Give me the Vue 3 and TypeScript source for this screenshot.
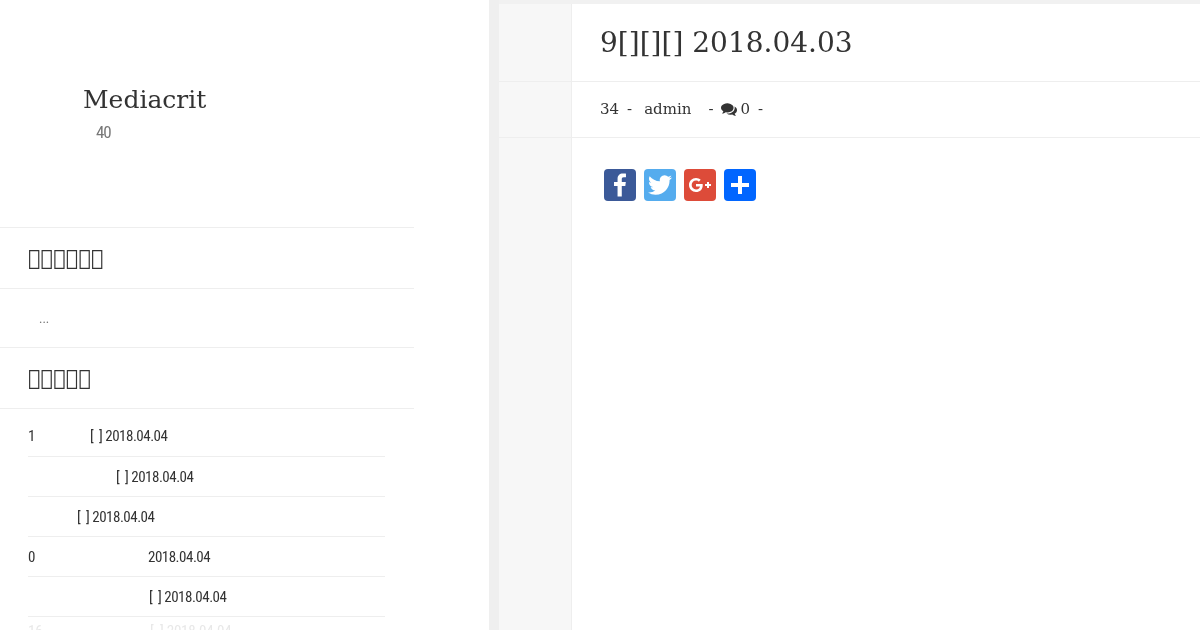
<script setup lang="ts">
interface Row { lead: string; pad: number; text: string; faint?: boolean }
const bracket = '[\u2009\u2009\u200A]\u00A0'
const rows: Row[] = [
  { lead: '1', pad: 62, text: bracket + '2018.04.04' },
  { lead: '', pad: 88, text: bracket + '2018.04.04' },
  { lead: '', pad: 49, text: bracket + '2018.04.04' },
  { lead: '0', pad: 120, text: '2018.04.04' },
  { lead: '', pad: 121, text: bracket + '2018.04.04' },
  { lead: '16', pad: 122, text: bracket + '2018.04.04', faint: true },
]
</script>

<template>
  <div class="page">
    <aside class="side">
      <header class="brand">
        <div class="logo">Mediacrit</div>
        <div class="sub">40</div>
      </header>
      <h3 class="wtitle first">&#xE000;&#xE000;&#xE000;&#xE000;&#xE000;&#xE000;</h3>
      <div class="dots">...</div>
      <h3 class="wtitle">&#xE000;&#xE000;&#xE000;&#xE000;&#xE000;</h3>
      <ul class="list">
        <li v-for="(r, i) in rows" :key="i" class="row" :class="{ faint: r.faint }">
          <span class="lead">{{ r.lead }}</span>
          <span :style="{ marginLeft: r.pad + 'px' }">{{ r.text }}</span>
        </li>
      </ul>
    </aside>
    <div class="gutter"></div>
    <main class="main">
      <div class="line title-line">
        <div class="rail"></div>
        <h1 class="title">9[][][] 2018.04.03</h1>
      </div>
      <div class="line meta-line">
        <div class="rail"></div>
        <div class="meta">
          <span>34</span><span class="sep">-</span><span class="author">admin</span><span class="sep wide">-</span>
          <svg class="comments" viewBox="0 0 1792 1792" width="16" height="16" aria-hidden="true"><path fill="#333" d="M1408 768q0 139-94 257t-256.500 186.500-353.500 68.500q-86 0-176-16-124 88-278 128-36 9-86 16h-3q-11 0-20.500-8t-11.500-21q-1-3-1-6.500t.5-6.500 2-6l2.500-5 3.500-5.500 4-5 4.500-5 4-4.500q5-6 23-25t26-29.500 22.500-29 25-38.500 20.500-44q-124-72-195-177t-71-224q0-139 94-257t256.500-186.500 353.500-68.500 353.500 68.500 256.500 186.500 94 257zm384 256q0 120-71 224.500t-195 176.500q10 24 20.500 44t25 38.500 22.500 29 26 29.500 23 25q1 1 4 4.500t4.500 5 4 5 3.500 5.500l2.500 5 2 6 .5 6.500-1 6.500q-3 14-13 22t-22 7q-50-7-86-16-154-40-278-128-90 16-176 16-271 0-472-132 58 4 88 4 161 0 309-45t264-129q125-92 192-212t67-254q0-77-23-152 129 71 204 178t75 230z"/></svg>
          <span class="count">0</span><span class="sep">-</span>
        </div>
      </div>
      <div class="body">
        <div class="rail"></div>
        <div class="share">
          <a class="btn fb">
            <svg viewBox="0 0 32 32"><path fill="#fff" d="M17.780 27.500V17.008h3.522l.527-4.090h-4.050v-2.610c0-1.182.33-1.990 2.023-1.990h2.166V4.660c-.375-.05-1.660-.16-3.155-.16-3.123 0-5.260 1.905-5.260 5.405v3.016h-3.530v4.090h3.530V27.500h4.223z"/></svg>
          </a>
          <a class="btn tw">
            <svg viewBox="0 0 32 32"><path fill="#fff" d="M28 8.557a9.913 9.913 0 0 1-2.828.775 4.930 4.930 0 0 0 2.166-2.725 9.738 9.738 0 0 1-3.130 1.194 4.920 4.920 0 0 0-3.593-1.550 4.924 4.924 0 0 0-4.794 6.049c-4.090-.21-7.720-2.170-10.150-5.150a4.942 4.942 0 0 0-.665 2.477c0 1.710.87 3.214 2.190 4.100a4.968 4.968 0 0 1-2.230-.616v.06c0 2.390 1.700 4.380 3.952 4.830-.414.115-.85.174-1.297.174-.318 0-.626-.03-.928-.086a4.935 4.935 0 0 0 4.600 3.420 9.893 9.893 0 0 1-6.114 2.107c-.398 0-.79-.023-1.175-.068a13.953 13.953 0 0 0 7.550 2.213c9.056 0 14.010-7.507 14.010-14.013 0-.213-.005-.426-.015-.637.96-.695 1.795-1.560 2.455-2.550z"/></svg>
          </a>
          <a class="btn gp">
            <svg viewBox="0 0 32 32"><path fill="#fff" d="M27 15h-2v-2h-2v2h-2v2h2v2h2v-2h2m-15-2v2.400h3.970c-.16 1.030-1.200 3.020-3.970 3.020-2.390 0-4.340-1.980-4.340-4.420s1.950-4.420 4.340-4.420c1.360 0 2.270.58 2.790 1.080l1.900-1.830C15.470 9.690 13.890 9 12 9c-3.870 0-7 3.130-7 7s3.130 7 7 7c4.040 0 6.720-2.840 6.720-6.840 0-.46-.05-.81-.11-1.160H12z"/></svg>
          </a>
          <a class="btn sh">
            <svg viewBox="0 0 32 32"><path fill="#fff" d="M14 7h4v18h-4z"/><path fill="#fff" d="M7 14h18v4H7z"/></svg>
          </a>
        </div>
      </div>
    </main>
  </div>
</template>

<style>
html, body { margin: 0; overflow: hidden; background: #fff; }
</style>

<style scoped>
.page {
  display: flex;
  width: 1200px;
  height: 630px;
  overflow: hidden;
  font-family: "DejaVu Serif", serif;
  color: #333;
  will-change: opacity;
}
.side { width: 489px; flex: none; padding-right: 75px; box-sizing: border-box; overflow: hidden; }
.brand { height: 227px; box-sizing: border-box; padding: 85px 0 0 83px; }
.logo { font-size: 25px; line-height: 30px; }
.sub { margin: 7px 0 0 13px; font: 17px/20px Roboto, sans-serif; font-stretch: 75%; letter-spacing: -1.2px; color: #777; }
.wtitle {
  margin: 0;
  height: 60px;
  padding: 0 28px;
  border-top: 1px solid #eee;
  border-bottom: 1px solid #eee;
  font-size: 21px;
  font-weight: 400;
  line-height: 60px;
}
.dots { height: 58px; padding-left: 39px; font: 13px/59px Roboto, sans-serif; color: #777; box-sizing: border-box; }
.list { list-style: none; margin: 0; padding: 7px 29px 0 28px; font: 15px/20px Roboto, sans-serif; font-stretch: 75%; letter-spacing: -.5px; }
.row { display: flex; height: 40px; padding-top: 10px; box-sizing: border-box; border-bottom: 1px solid #eee; }
.row:first-child { height: 41px; }
.faint { padding-top: 4px; color: #e8e8e8; border-bottom: 0; letter-spacing: -.25px; }
.lead { width: 0; white-space: nowrap; }
.gutter { width: 10px; flex: none; background: #efefef; }
.main { flex: 1; min-width: 0; border-top: 4px solid #f1f1f1; display: flex; flex-direction: column; }
.line { display: flex; border-bottom: 1px solid #eee; }
.rail { width: 72px; flex: none; background: #f7f7f7; border-right: 1px solid #eee; }
.title-line { height: 77px; }
.meta-line { height: 55px; }
.title { margin: 0; padding: 0 0 0 28px; font-size: 28px; font-weight: 400; line-height: 77px; }
.meta { padding-left: 28px; font-size: 15px; line-height: 55px; display: flex; align-items: center; white-space: pre; }
.sep { margin: 0 8px; }
.sep.wide { margin-left: 17px; margin-right: 8px; }
.author { margin-left: 4px; }
.comments { margin-top: -2px; }
.count { margin-left: 3px; }
.body { flex: 1; display: flex; }
.share { padding: 31px 0 0 32px; display: flex; gap: 8px; }
.btn { display: block; width: 32px; height: 32px; border-radius: 4px; }
.btn svg { display: block; width: 32px; height: 32px; }
.fb { background: #3b5998; }
.tw { background: #55acee; }
.gp { background: #dd4b39; }
.sh { background: #0166ff; }
</style>
